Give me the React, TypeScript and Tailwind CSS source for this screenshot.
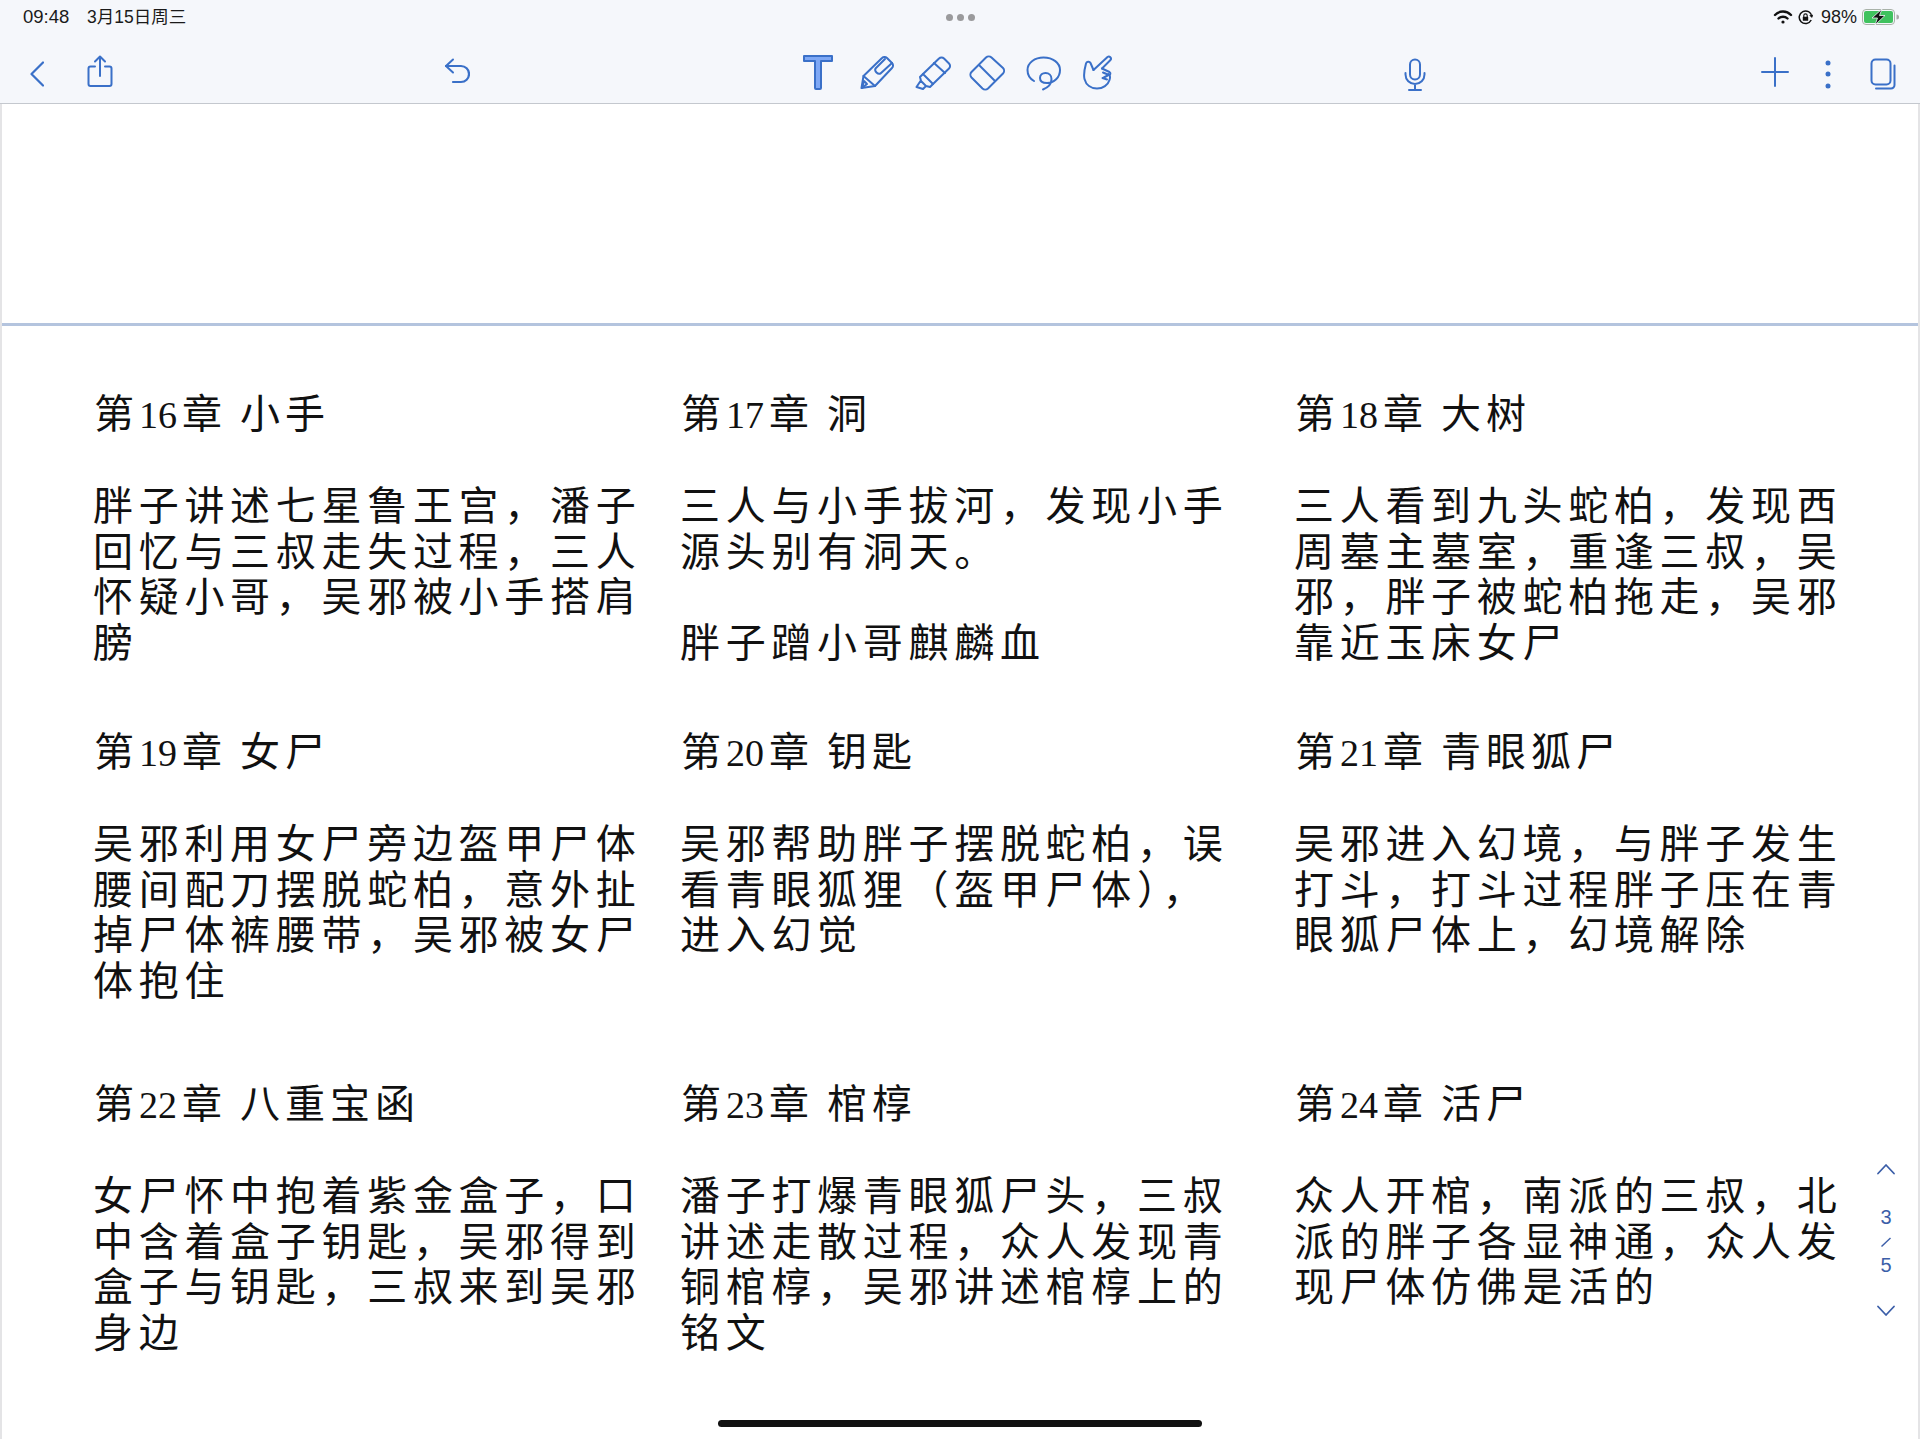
import React from "react";

const ICON = "#3a70c8";

function Sv({ w, h, ml, mt, children }: { w: number; h: number; ml: string; mt?: string; children: React.ReactNode }) {
  return (
    <svg width={w} height={h} viewBox={`0 0 ${w} ${h}`} fill="none" stroke={ICON} strokeWidth={2} strokeLinecap="round" strokeLinejoin="round" className={`shrink-0 ${ml} ${mt ?? ""}`}>
      {children}
    </svg>
  );
}

type Cell = { no: string; title: string; lines: string[] };

const rows: { h: string; cells: Cell[] }[] = [
  {
    h: "h-[338px]",
    cells: [
      { no: "16", title: "小手", lines: ["胖子讲述七星鲁王宫，潘子", "回忆与三叔走失过程，三人", "怀疑小哥，吴邪被小手搭肩", "膀"] },
      { no: "17", title: "洞", lines: ["三人与小手拔河，发现小手", "源头别有洞天。", "", "胖子蹭小哥麒麟血"] },
      { no: "18", title: "大树", lines: ["三人看到九头蛇柏，发现西", "周墓主墓室，重逢三叔，吴", "邪，胖子被蛇柏拖走，吴邪", "靠近玉床女尸"] },
    ],
  },
  {
    h: "h-[352px]",
    cells: [
      { no: "19", title: "女尸", lines: ["吴邪利用女尸旁边盔甲尸体", "腰间配刀摆脱蛇柏，意外扯", "掉尸体裤腰带，吴邪被女尸", "体抱住"] },
      { no: "20", title: "钥匙", lines: ["吴邪帮助胖子摆脱蛇柏，误", "看青眼狐狸（盔甲尸体），", "进入幻觉"] },
      { no: "21", title: "青眼狐尸", lines: ["吴邪进入幻境，与胖子发生", "打斗，打斗过程胖子压在青", "眼狐尸体上，幻境解除"] },
    ],
  },
  {
    h: "h-[300px]",
    cells: [
      { no: "22", title: "八重宝函", lines: ["女尸怀中抱着紫金盒子，口", "中含着盒子钥匙，吴邪得到", "盒子与钥匙，三叔来到吴邪", "身边"] },
      { no: "23", title: "棺椁", lines: ["潘子打爆青眼狐尸头，三叔", "讲述走散过程，众人发现青", "铜棺椁，吴邪讲述棺椁上的", "铭文"] },
      { no: "24", title: "活尸", lines: ["众人开棺，南派的三叔，北", "派的胖子各显神通，众人发", "现尸体仿佛是活的"] },
    ],
  },
];

function Note({ c }: { c: Cell }) {
  return (
    <div className="leading-[45.7px] text-[#111111]">
      <div className="h-[44.7px] leading-[44px] text-[40px] tracking-[5px] whitespace-nowrap pl-[1px]">
        第<span className="text-[38px] tracking-normal font-['Liberation_Serif',serif] mr-[5px]">{c.no}</span>章
        <span className="ml-[13px]">{c.title}</span>
      </div>
      <div className="h-[46.7px]" />
      {c.lines.map((l, i) => (
        <div key={i} className="h-[45.7px] text-[40px] tracking-[5.7px] whitespace-nowrap">
          {l}
        </div>
      ))}
    </div>
  );
}

export default function App() {
  return (
    <div className="relative w-[1920px] h-[1439px] overflow-hidden bg-white flex flex-col font-['Liberation_Serif','Noto_Sans_CJK_SC',serif]">
      <header className="h-[104px] shrink-0 bg-[#f5f7fb] border-b border-[#c4c8ce] flex flex-col font-['Liberation_Sans','Noto_Sans_CJK_SC',sans-serif]">
        <div className="h-[34px] flex items-center text-[#1a1a1a]">
          <span className="ml-[23px] w-[64px] text-[18.5px]">09:48</span>
          <span className="w-[100px] whitespace-nowrap text-[17.5px]">3月15日周三</span>
          <div className="ml-[759px] flex gap-[4px]">
            <span className="w-[7px] h-[7px] rounded-full bg-[#9a9a9c]" />
            <span className="w-[7px] h-[7px] rounded-full bg-[#9a9a9c]" />
            <span className="w-[7px] h-[7px] rounded-full bg-[#9a9a9c]" />
          </div>
          <svg width="20" height="14" viewBox="0 0 20 14" fill="none" stroke="#111" strokeWidth="2.4" strokeLinecap="round" className="ml-[798px] shrink-0">
            <path d="M2 5a11 11 0 0 1 16 0" />
            <path d="M5.500 8.500a6.500 6.500 0 0 1 9 0" />
            <circle cx="10" cy="12" r="1.600" fill="#111" stroke="none" />
          </svg>
          <svg width="15" height="15" viewBox="0 0 15 15" fill="none" stroke="#111" strokeWidth="1.500" className="ml-[5px] shrink-0">
            <path d="M13.200 10A6.300 6.300 0 1 1 13.800 6.500" />
            <path d="m11.800 5.500 2 2 1-2.500z" fill="#111" strokeWidth="0.600" />
            <rect x="4.800" y="6.800" width="5.400" height="4" fill="#111" stroke="none" rx="0.600" />
            <path d="M5.800 7V5.600a1.700 1.700 0 0 1 3.400 0V7" strokeWidth="1.100" />
          </svg>
          <span className="ml-[8px] w-[41px] whitespace-nowrap text-[18px]">98%</span>
          <svg width="37" height="16" viewBox="0 0 37 16" fill="none" className="shrink-0">
            <rect x="0.500" y="0.500" width="32" height="15" rx="3.500" stroke="#a8b2a8" />
            <rect x="2" y="2" width="29" height="12" rx="2" fill="#3fc25e" />
            <path d="M34.500 5.500v5a2.500 2.500 0 0 0 0-5z" fill="#a8a8a8" />
            <path d="M20 0 10 9h5.500l-2.500 7 10-9.500h-5.500z" fill="#111" stroke="#f5f7fb" strokeWidth="0.800" />
          </svg>
        </div>
        <div className="flex-1 flex items-start pt-[21px]">
          <Sv w={14} h={26} ml="ml-[30px]" mt="mt-[6px]"><path d="M13 1.500 1.500 13 13 24.500" strokeWidth={2.2} /></Sv>
          <Sv w={26} h={32} ml="ml-[43px]">
            <path d="M8 11.500H3.500a2 2 0 0 0-2 2V29a2 2 0 0 0 2 2h19a2 2 0 0 0 2-2V13.500a2 2 0 0 0-2-2H18" />
            <path d="M13 21V1.500M8 6.500l5-5 5 5" />
          </Sv>
          <Sv w={26} h={27} ml="ml-[331px]" mt="mt-[3px]">
            <path d="M9 1.500 2 8l7 6.500" />
            <path d="M2 8h15a7.500 7.500 0 0 1 0 16H9" strokeWidth={2.2} />
          </Sv>
          <svg width="30" height="35" viewBox="0 0 30 35" className="ml-[333px] shrink-0" fill="#7ea8f5" stroke={ICON} strokeWidth="2" strokeLinejoin="round">
            <path d="M1 1h28v5H18v27a1 1 0 0 1-1 1h-4a1 1 0 0 1-1-1V6H1z" />
          </svg>
          <Sv w={36} h={35} ml="ml-[27px]">
            <path d="M1.500 33 3.500 21 22 3a3.500 3.500 0 0 1 5 0l5 5a3.500 3.500 0 0 1 0 5L15 31z" />
            <path d="M3.500 21 15 31M2 33l5-4-3-3z" />
            <path d="M25 4 15.500 13.500q-1 2 1 4t4 1L32 8" />
          </Sv>
          <Sv w={38} h={35} ml="ml-[19px]">
            <path d="M8 19 24 3.500a3.500 3.500 0 0 1 5 0l5 5a3.500 3.500 0 0 1 0 5L18 29z" />
            <path d="M19 8 30 18M8 19l-3 3 1 4 5 5 4 1 3-3M5.500 26 1.500 32 8 34l3-3" />
          </Sv>
          <Sv w={37} h={37} ml="ml-[16px]">
            <path d="M2.500 17 17 2.500a4 4 0 0 1 5.500 0L34 13a4 4 0 0 1 0 5.500L19 33.500a4 4 0 0 1-5.500 0L2.500 22.500a4 4 0 0 1 0-5.500z" />
            <path d="M10 10 26 26" />
          </Sv>
          <Sv w={36} h={36} ml="ml-[20px]" mt="mt-[1px]">
            <path d="M8 25C3.500 22.500 1.500 18.500 1.500 14 1.500 6.500 9 1.500 17.500 1.500 27 1.500 34 7 34 14 34 21.500 28 27 21 27 16.500 27 14 25 14 22 14 19 16.500 17 19.500 17 23 17 25.500 19.500 25.500 23 25.500 28 22 31.500 17 33.500" />
          </Sv>
          <Sv w={30} h={35} ml="ml-[21px]">
            <path d="M10.500 15 24.500 2c2-1.500 4.500 1 3 3L19 13.500" />
            <path d="M10.500 15 7.500 8C6.500 6 3.500 6.500 3 8.500 1.500 14 .5 20 1.500 24 3 30 8 33.500 14 33.500 20 33.500 25 30 26.500 25 27.500 22 27 20 25.500 19" />
            <path d="M19 13.500l7.500 3.500c1.500 1 1 3-.5 3l-6-2.500M25.500 20l-5.500 3M24 24.500l-4.500-1.500" />
          </Sv>
          <Sv w={22} h={33} ml="ml-[291px]" mt="mt-[3px]">
            <rect x="6" y="1.500" width="10" height="20" rx="5" />
            <path d="M1.500 15v1.500a9.500 9.500 0 0 0 19 0V15M11 26v6M5 32h12" />
          </Sv>
          <Sv w={28} h={30} ml="ml-[335px]" mt="mt-[2px]"><path d="M14 1v28M1 15h26" /></Sv>
          <svg width="8" height="30" viewBox="0 0 8 30" className="ml-[35px] mt-[4px] shrink-0" fill={ICON}>
            <circle cx="4" cy="4" r="2.500" />
            <circle cx="4" cy="15" r="2.500" />
            <circle cx="4" cy="27" r="2.500" />
          </svg>
          <Sv w={26} h={32} ml="ml-[38px]" mt="mt-[3px]">
            <rect x="1.500" y="1.500" width="19" height="25" rx="4" />
            <path d="M6 30.500h15a3.500 3.500 0 0 0 3.500-3.500V7.500" />
          </Sv>
        </div>
      </header>

      <main className="flex-1 border-x-2 border-[#e4e4e6] flex flex-col min-h-0">
        <div className="h-[222px] shrink-0 border-b-[3px] border-[#b4c4de]" />
        <div className="pt-[66.500px] pl-[91px]">
          {rows.map((r, i) => (
            <div key={i} className={`grid grid-cols-[587px_614px_1fr] ${r.h}`}>
              {r.cells.map((c) => (
                <Note key={c.no} c={c} />
              ))}
            </div>
          ))}
        </div>
      </main>

      <div className="absolute left-[1874px] top-[1163px] w-[24px] flex flex-col items-center text-[#3b5ea8] font-['Liberation_Sans',sans-serif] text-[20px] leading-[24px]">
        <svg width="20" height="12" viewBox="0 0 20 12" fill="none" stroke="#3b5ea8" strokeWidth="1.800" strokeLinecap="round" strokeLinejoin="round">
          <path d="M2 10.500 10 2l8 8.500" />
        </svg>
        <span className="mt-[30px]">3</span>
        <svg width="12" height="10" viewBox="0 0 12 10" fill="none" stroke="#3b5ea8" strokeWidth="1.400" className="mt-[8px] mb-[6px]">
          <path d="M1.500 9.500 10.500 1" />
        </svg>
        <span>5</span>
        <svg width="20" height="12" viewBox="0 0 20 12" fill="none" stroke="#3b5ea8" strokeWidth="1.800" strokeLinecap="round" strokeLinejoin="round" className="mt-[28px]">
          <path d="M2 1.500 10 10l8-8.500" />
        </svg>
      </div>

      <div className="absolute left-[718px] top-[1420px] w-[484px] h-[7px] rounded-full bg-[#111111]" />
    </div>
  );
}
